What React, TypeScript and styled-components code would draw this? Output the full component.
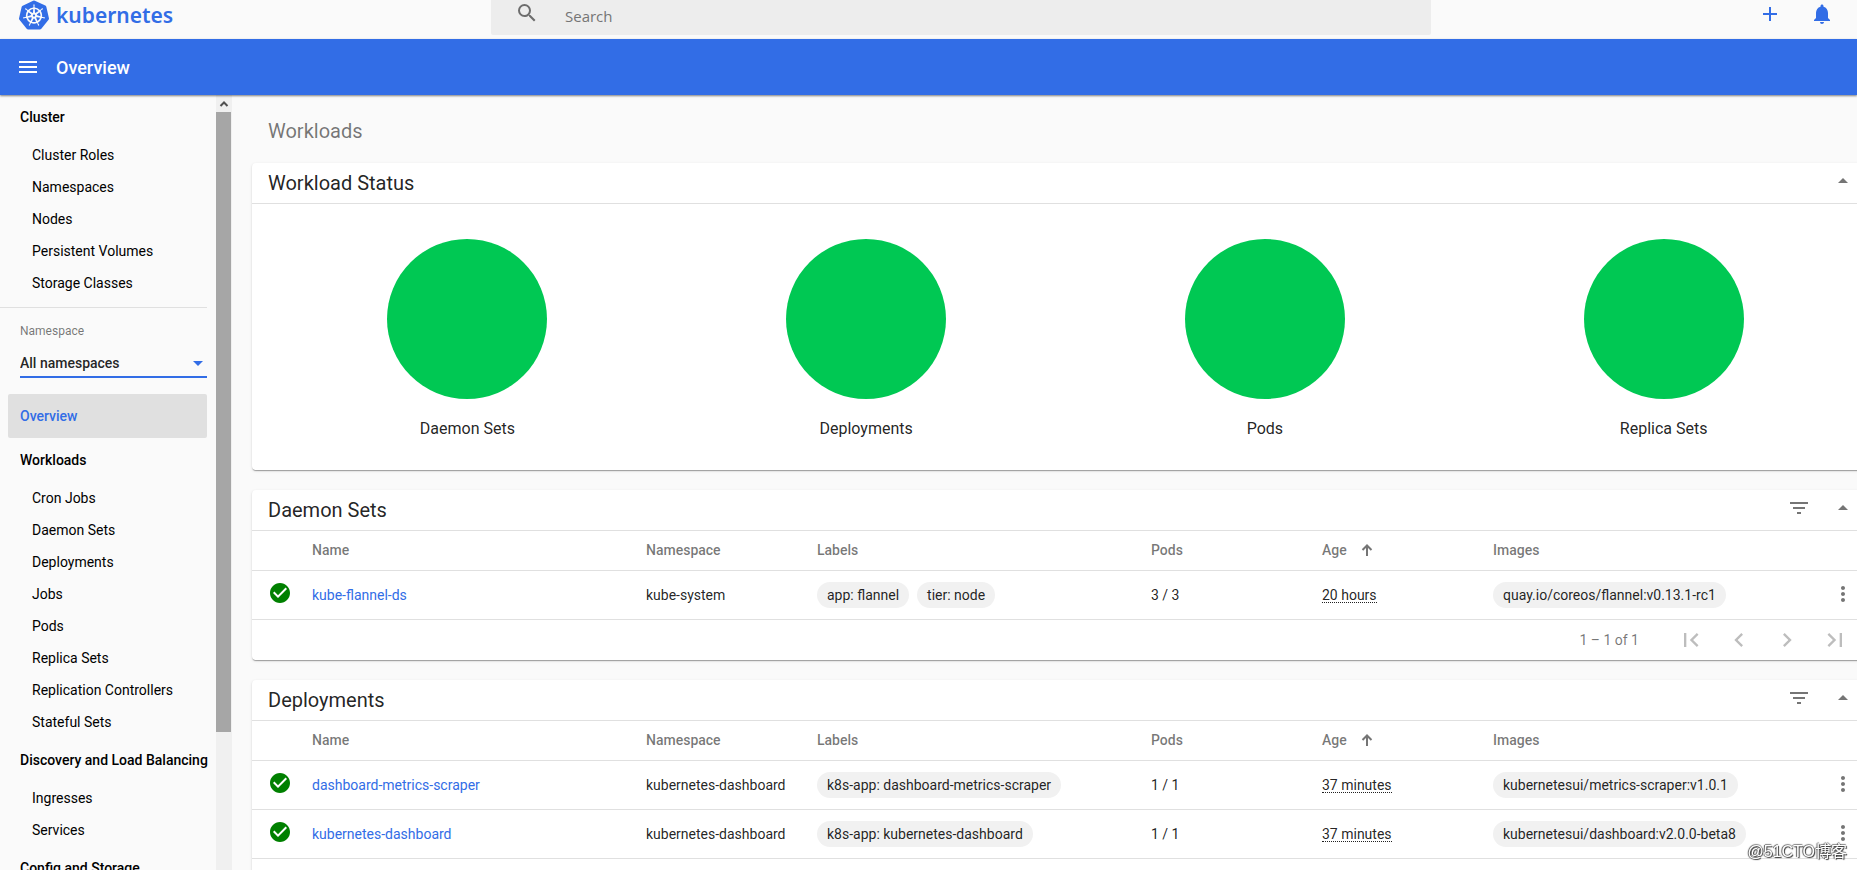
import React from "react";
import styled, { createGlobalStyle } from "styled-components";
import {
  MdAdd,
  MdArrowDropDown,
  MdArrowDropUp,
  MdCheckCircle,
  MdChevronLeft,
  MdChevronRight,
  MdFilterList,
  MdFirstPage,
  MdLastPage,
  MdMenu,
  MdMoreVert,
  MdNotifications,
  MdSearch,
} from "react-icons/md";
import { SiKubernetes } from "react-icons/si";

const blue = "#326de6";
const text = "rgba(0, 0, 0, 0.87)";
const muted = "rgba(0, 0, 0, 0.54)";
const line = "#e0e0e0";
const shadow =
  "0 2px 1px -1px rgba(0, 0, 0, 0.2), 0 1px 1px rgba(0, 0, 0, 0.14), 0 1px 3px rgba(0, 0, 0, 0.12)";

const GlobalStyle = createGlobalStyle`
  *, *::before, *::after { box-sizing: border-box; }
  body {
    margin: 0;
    background: #fafafa;
    color: ${text};
    font: 400 14px/20px Roboto, sans-serif;
  }
  button, input, select { font: inherit; color: inherit; }
  a { color: inherit; text-decoration: none; }
`;

const Shell = styled.div`
  display: flex;
  flex-direction: column;
  height: 100vh;
  overflow: hidden;
`;

const IconButton = styled.button<{ $size?: number }>`
  display: flex;
  align-items: center;
  justify-content: center;
  flex: none;
  width: ${(p) => p.$size ?? 40}px;
  height: ${(p) => p.$size ?? 40}px;
  padding: 0;
  border: 0;
  background: none;
  color: inherit;
  cursor: pointer;
`;

const TopBar = styled.header`
  display: grid;
  grid-template-columns: 1fr 940px 426px;
  align-items: start;
  flex: none;
  height: 39px;
  color: ${blue};
`;

const Brand = styled.a`
  display: flex;
  align-items: center;
  gap: 7px;
  height: 30px;
  padding-left: 19px;
  font: 600 21px/24px "Noto Sans", sans-serif;
`;

const SearchBox = styled.label`
  display: flex;
  align-items: center;
  gap: 26px;
  height: 35px;
  padding: 0 24px 10px;
  border-radius: 0 0 2px 2px;
  background: #ededed;
  color: ${muted};
`;

const SearchInput = styled.input`
  flex: 1;
  height: 24px;
  margin-top: 6px;
  padding: 0;
  border: 0;
  outline: 0;
  background: none;
  font: 400 15px/24px "Open Sans", sans-serif;
  &::placeholder {
    color: #757575;
    opacity: 1;
  }
`;

const Actions = styled.div`
  display: flex;
  justify-content: flex-end;
  gap: 28px;
  padding: 2px 23px 0 0;
`;

const TitleBar = styled.div`
  display: flex;
  align-items: center;
  gap: 16px;
  flex: none;
  height: 56px;
  padding: 0 16px;
  background: ${blue};
  color: #fff;
  box-shadow: 0 1px 2px rgba(0, 0, 0, 0.5);
  z-index: 1;
`;

const PageTitle = styled.h1`
  margin: 0;
  padding-top: 2px;
  font-size: 18px;
  font-weight: 500;
  line-height: 24px;
`;

const Body = styled.div`
  display: flex;
  flex: 1;
  min-height: 0;
  overflow: hidden;
`;

const Sidebar = styled.aside`
  display: flex;
  flex: none;
  width: 232px;
`;

const Nav = styled.nav`
  flex: 1;
  padding-right: 9px;
  overflow: hidden;
  color: #000;
  white-space: nowrap;
`;

const GroupTitle = styled.a`
  display: block;
  padding: 12px 0 12px 20px;
  font-weight: 500;
`;

const NavItem = styled.a`
  display: block;
  padding: 6px 0 6px 32px;
`;

const ActiveItem = styled.a`
  display: block;
  margin-left: 8px;
  padding: 12px;
  border-radius: 2px;
  background: ${line};
  color: ${blue};
  font-weight: 500;
`;

const NamespaceField = styled.label`
  display: flex;
  flex-direction: column;
  gap: 10px;
  margin-top: 8px;
  padding: 14px 0 16px 20px;
  border-top: 1px solid ${line};
  color: ${muted};
  font-size: 12px;
  line-height: 18px;
`;

const SelectWrap = styled.span`
  display: grid;
  grid-template-columns: 1fr 18px;
  align-items: center;
  border-bottom: 2px solid ${blue};
  color: ${blue};
`;

const Select = styled.select`
  grid-column: 1 / 3;
  grid-row: 1;
  height: 26px;
  padding: 0;
  border: 0;
  outline: 0;
  appearance: none;
  background: none;
  color: ${text};
  font-size: 14px;
  font-weight: 500;
`;

const SelectArrow = styled(MdArrowDropDown)`
  grid-column: 2;
  grid-row: 1;
  justify-self: center;
  pointer-events: none;
`;

const Scrollbar = styled.div`
  display: flex;
  flex-direction: column;
  flex: none;
  width: 16px;
  background: #f0f0f0;
`;

const ScrollArrow = styled.svg`
  display: block;
  flex: none;
  width: 16px;
  height: 17px;
`;

const ScrollThumb = styled.div`
  width: 15px;
  height: 80%;
  background: #a6a6a6;
`;

/* The workspace runs a little past the right edge of the window. */
const Main = styled.main`
  flex: 1;
  min-width: 0;
  margin-right: -22px;
  padding: 24px 0 0 20px;
`;

const SectionTitle = styled.h2`
  margin: 0 0 20px;
  padding-left: 16px;
  color: ${muted};
  font-size: 20px;
  font-weight: 400;
  line-height: 24px;
`;

const Card = styled.section`
  margin-bottom: 20px;
  border-radius: 4px;
  background: #fff;
  box-shadow: ${shadow};
`;

const CardHeader = styled.header`
  display: flex;
  align-items: center;
  gap: 4px;
  height: 41px;
  padding: 0 16px;
  border-bottom: 1px solid ${line};
  color: ${muted};
`;

const CardTitle = styled.h3`
  flex: 1;
  margin: 0;
  color: ${text};
  font-size: 20px;
  font-weight: 400;
  line-height: 24px;
`;

const HeaderButton = styled(IconButton)`
  height: 36px;
  margin-bottom: 4px;
`;

const Charts = styled.div`
  display: grid;
  grid-template-columns: repeat(4, 1fr);
  padding: 35px 16px 29px;
`;

const Chart = styled.figure`
  display: flex;
  flex-direction: column;
  align-items: center;
  gap: 18px;
  margin: 0;
  font-size: 16px;
  line-height: 24px;
`;

const Pie = styled.div`
  width: 160px;
  height: 160px;
  border-radius: 50%;
  background: #00c853;
`;

const Table = styled.table`
  display: block;
  thead,
  tbody {
    display: block;
  }
`;

const Row = styled.tr<{ $head?: boolean }>`
  display: grid;
  grid-template-columns: 52px 2fr 1fr 2fr 1fr 1fr 2fr 52px;
  column-gap: 8px;
  align-items: center;
  height: ${(p) => (p.$head ? 40 : 49)}px;
  border-bottom: 1px solid ${line};
  white-space: nowrap;
`;

const HeadCell = styled.th`
  padding: 0 0 2px;
  color: ${muted};
  font-weight: 500;
  text-align: left;
`;

const Cell = styled.td`
  display: flex;
  gap: 8px;
  min-width: 0;
  padding: 0;
`;

const StatusCell = styled(Cell)`
  padding: 0 0 4px 16px;
  color: #008000;
`;

const SortButton = styled.button`
  display: flex;
  align-items: center;
  gap: 14px;
  padding: 0;
  border: 0;
  background: none;
  font-weight: 500;
`;

const NameLink = styled.a`
  color: ${blue};
`;

const Chip = styled.span`
  padding: 3px 10px;
  border-radius: 13px;
  background: #f1f1f1;
`;

const Age = styled.abbr`
  border-bottom: 1px dotted ${text};
  line-height: 14px;
  text-decoration: none;
`;

const MenuCell = styled(Cell)`
  padding-bottom: 2px;
  color: ${muted};
`;

const Footer = styled.footer`
  display: flex;
  align-items: center;
  justify-content: flex-end;
  height: 40px;
  padding-right: 20px;
  color: ${muted};
`;

const Range = styled.span`
  margin-right: 28px;
`;

const PageButton = styled(IconButton)`
  height: 36px;
  color: #bdbdbd;
`;

const Watermark = styled.div`
  position: fixed;
  right: 10px;
  bottom: 7px;
  color: #fff;
  font: 400 16px/22px "Liberation Sans", "Noto Sans CJK SC", sans-serif;
  text-shadow: 1px 1px 1px #333, -1px 0 1px #555, 0 -1px 1px #888;
  z-index: 2;
`;

interface Resource {
  name: string;
  namespace: string;
  labels: string[];
  pods: string;
  age: string;
  image: string;
}

const statuses = ["Daemon Sets", "Deployments", "Pods", "Replica Sets"];

const daemonSets: Resource[] = [
  {
    name: "kube-flannel-ds",
    namespace: "kube-system",
    labels: ["app: flannel", "tier: node"],
    pods: "3 / 3",
    age: "20 hours",
    image: "quay.io/coreos/flannel:v0.13.1-rc1",
  },
];

const deployments: Resource[] = [
  {
    name: "dashboard-metrics-scraper",
    namespace: "kubernetes-dashboard",
    labels: ["k8s-app: dashboard-metrics-scraper"],
    pods: "1 / 1",
    age: "37 minutes",
    image: "kubernetesui/metrics-scraper:v1.0.1",
  },
  {
    name: "kubernetes-dashboard",
    namespace: "kubernetes-dashboard",
    labels: ["k8s-app: kubernetes-dashboard"],
    pods: "1 / 1",
    age: "37 minutes",
    image: "kubernetesui/dashboard:v2.0.0-beta8",
  },
];

function NavGroup({ title, items }: { title: string; items: string[] }) {
  return (
    <>
      <GroupTitle href="#">{title}</GroupTitle>
      {items.map((item) => (
        <NavItem key={item} href="#">
          {item}
        </NavItem>
      ))}
    </>
  );
}

function ResourceCard({
  title,
  rows,
  range,
}: {
  title: string;
  rows: Resource[];
  range?: string;
}) {
  return (
    <Card>
      <CardHeader>
        <CardTitle>{title}</CardTitle>
        <HeaderButton aria-label="Filter">
          <MdFilterList size={24} />
        </HeaderButton>
        <HeaderButton aria-label="Collapse">
          <MdArrowDropUp size={24} />
        </HeaderButton>
      </CardHeader>
      <Table>
        <thead>
          <Row $head>
            <HeadCell />
            <HeadCell>Name</HeadCell>
            <HeadCell>Namespace</HeadCell>
            <HeadCell>Labels</HeadCell>
            <HeadCell>Pods</HeadCell>
            <HeadCell>
              <SortButton>
                Age
                <svg width="12" height="12" viewBox="0 0 12 12" fill="none" stroke="currentColor" strokeWidth="2">
                  <path d="M6 12V2M1.5 6 6 1.5 10.500 6" />
                </svg>
              </SortButton>
            </HeadCell>
            <HeadCell>Images</HeadCell>
            <HeadCell />
          </Row>
        </thead>
        <tbody>
          {rows.map((row) => (
            <Row key={row.name}>
              <StatusCell>
                <MdCheckCircle size={24} />
              </StatusCell>
              <Cell>
                <NameLink href="#">{row.name}</NameLink>
              </Cell>
              <Cell>{row.namespace}</Cell>
              <Cell>
                {row.labels.map((label) => (
                  <Chip key={label}>{label}</Chip>
                ))}
              </Cell>
              <Cell>{row.pods}</Cell>
              <Cell>
                <Age>{row.age}</Age>
              </Cell>
              <Cell>
                <Chip>{row.image}</Chip>
              </Cell>
              <MenuCell>
                <IconButton $size={32} aria-label="Actions">
                  <MdMoreVert size={24} />
                </IconButton>
              </MenuCell>
            </Row>
          ))}
        </tbody>
      </Table>
      <Footer>
        {range && (
          <>
            <Range>{range}</Range>
            <PageButton $size={48} aria-label="First page">
              <MdFirstPage size={28} />
            </PageButton>
            <PageButton $size={48} aria-label="Previous page">
              <MdChevronLeft size={28} />
            </PageButton>
            <PageButton $size={48} aria-label="Next page">
              <MdChevronRight size={28} />
            </PageButton>
            <PageButton $size={48} aria-label="Last page">
              <MdLastPage size={28} />
            </PageButton>
          </>
        )}
      </Footer>
    </Card>
  );
}

export default function App() {
  return (
    <Shell>
      <GlobalStyle />
      <TopBar>
        <Brand href="#">
          <SiKubernetes size={30} />
          kubernetes
        </Brand>
        <SearchBox>
          <MdSearch size={24} />
          <SearchInput type="search" placeholder="Search" aria-label="Search" />
        </SearchBox>
        <Actions>
          <IconButton $size={24} aria-label="Create">
            <MdAdd size={24} />
          </IconButton>
          <IconButton $size={24} aria-label="Notifications">
            <MdNotifications size={24} />
          </IconButton>
        </Actions>
      </TopBar>
      <TitleBar>
        <IconButton $size={24} aria-label="Menu">
          <MdMenu size={24} />
        </IconButton>
        <PageTitle>Overview</PageTitle>
      </TitleBar>
      <Body>
        <Sidebar>
          <Nav>
            <NavGroup
              title="Cluster"
              items={["Cluster Roles", "Namespaces", "Nodes", "Persistent Volumes", "Storage Classes"]}
            />
            <NamespaceField>
              Namespace
              <SelectWrap>
                <Select defaultValue="all">
                  <option value="all">All namespaces</option>
                </Select>
                <SelectArrow size={24} />
              </SelectWrap>
            </NamespaceField>
            <ActiveItem href="#">Overview</ActiveItem>
            <NavGroup
              title="Workloads"
              items={[
                "Cron Jobs",
                "Daemon Sets",
                "Deployments",
                "Jobs",
                "Pods",
                "Replica Sets",
                "Replication Controllers",
                "Stateful Sets",
              ]}
            />
            <NavGroup title="Discovery and Load Balancing" items={["Ingresses", "Services"]} />
            <NavGroup title="Config and Storage" items={[]} />
          </Nav>
          <Scrollbar>
            <ScrollArrow viewBox="0 0 16 17" fill="none" stroke="#505050" strokeWidth="2">
              <path d="M4.500 11 8 7.500 11.500 11" />
            </ScrollArrow>
            <ScrollThumb />
          </Scrollbar>
        </Sidebar>
        <Main>
          <SectionTitle>Workloads</SectionTitle>
          <Card>
            <CardHeader>
              <CardTitle>Workload Status</CardTitle>
              <HeaderButton aria-label="Collapse">
                <MdArrowDropUp size={24} />
              </HeaderButton>
            </CardHeader>
            <Charts>
              {statuses.map((status) => (
                <Chart key={status}>
                  <Pie />
                  <figcaption>{status}</figcaption>
                </Chart>
              ))}
            </Charts>
          </Card>
          <ResourceCard title="Daemon Sets" rows={daemonSets} range="1 – 1 of 1" />
          <ResourceCard title="Deployments" rows={deployments} />
        </Main>
      </Body>
      <Watermark>@51CTO博客</Watermark>
    </Shell>
  );
}
